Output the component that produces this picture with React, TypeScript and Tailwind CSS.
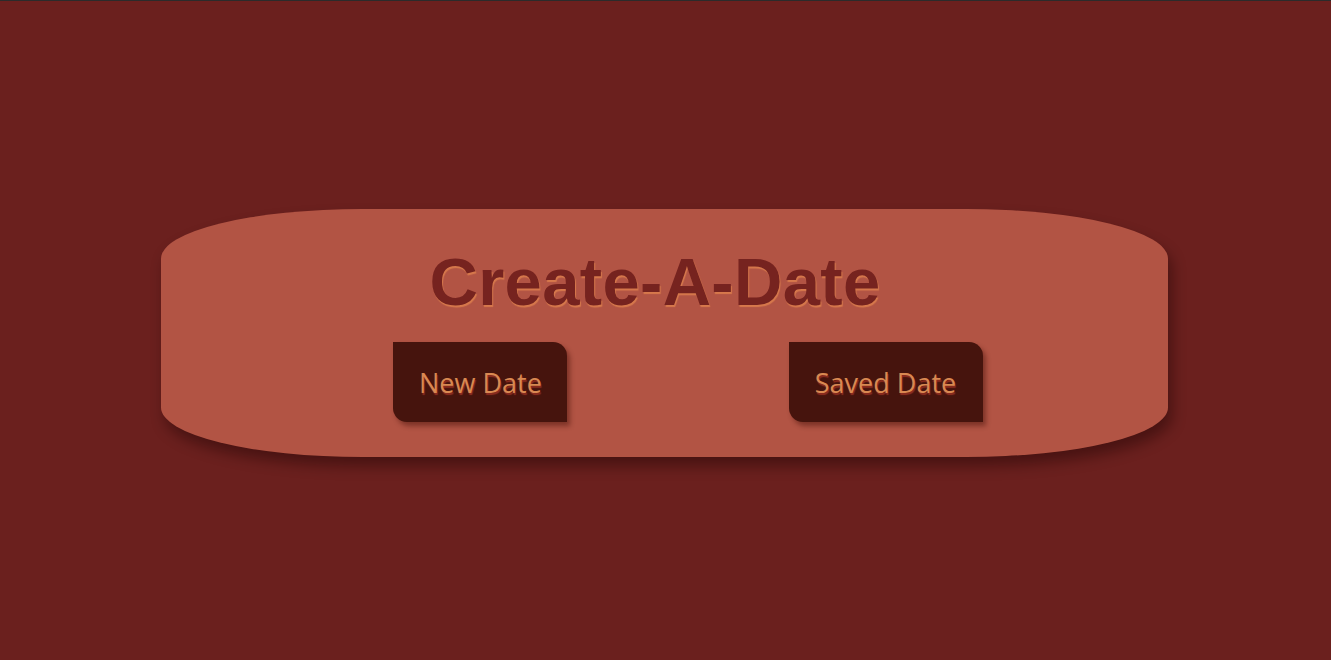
export default function App() {
  return (
    <div className="min-h-screen w-full border-t border-[#2b2b2b] bg-[#6b201e]">
      <div className="mt-[208px] ml-[161px] w-[1007px] rounded-[20%] bg-[#b25444] pt-[39px] pb-[35px] shadow-[4px_9px_14px_rgba(30,5,5,0.45)]">
        <h1
          className="pr-[19px] text-center text-[67px] leading-none font-bold tracking-[0.33px] text-[#76231f] [text-shadow:1px_2px_1px_#d7794c]"
          style={{ fontFamily: '"Liberation Sans", Arial, sans-serif' }}
        >
          Create-A-Date
        </h1>
        <div className="mt-[27px] flex gap-[222px] pl-[232px]">
          <button
            className="flex h-[80px] items-center rounded-tr-[14px] rounded-bl-[14px] bg-[#46140d] pt-[3px] pr-[25px] pl-[26px] text-[27px] text-[#d98952] shadow-[3px_4px_5px_rgba(60,10,5,0.45)] [text-shadow:1px_2px_1px_#8f2d20]"
            style={{ fontFamily: '"Open Sans", "Noto Sans", sans-serif' }}
          >
            New Date
          </button>
          <button
            className="flex h-[80px] items-center rounded-tr-[14px] rounded-bl-[14px] bg-[#46140d] pt-[3px] pr-[27px] pl-[26px] text-[27px] text-[#d98952] shadow-[3px_4px_5px_rgba(60,10,5,0.45)] [text-shadow:1px_2px_1px_#8f2d20]"
            style={{ fontFamily: '"Open Sans", "Noto Sans", sans-serif' }}
          >
            Saved Date
          </button>
        </div>
      </div>
    </div>
  );
}
